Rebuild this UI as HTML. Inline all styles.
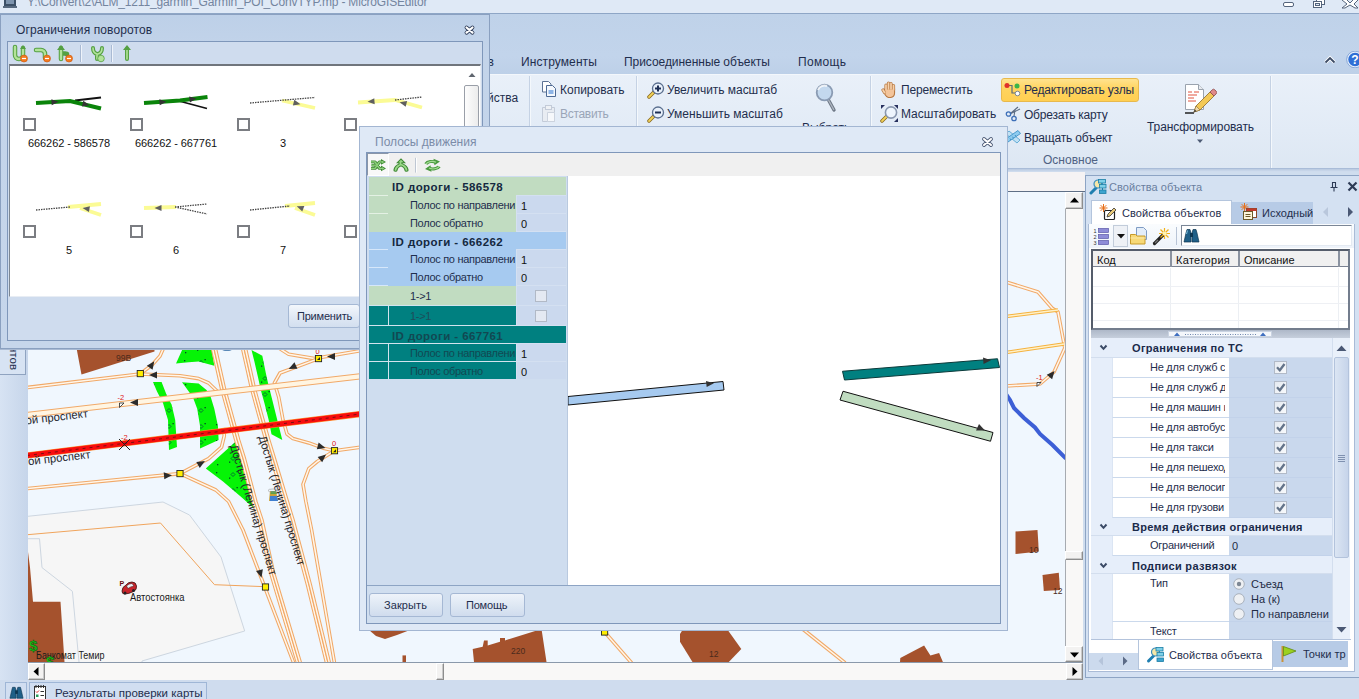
<!DOCTYPE html>
<html lang="ru"><head><meta charset="utf-8"><title>MicroGISEditor</title>
<style>
*{box-sizing:border-box;margin:0;padding:0}
html,body{width:1359px;height:699px;overflow:hidden}
body{position:relative;background:#cfddee;font-family:"Liberation Sans",sans-serif;font-size:11px;color:#1e2b44}
.a{position:absolute}
.t{position:absolute;white-space:nowrap;line-height:14px}
.r12{font-size:12px;color:#1f2e4d}
/* title */
#title{left:0;top:0;width:1359px;height:14px;background:#dfe9f6;border-bottom:1px solid #8ea6c6}
#tabs{left:0;top:14px;width:1359px;height:60px;background:linear-gradient(#bfd2e9,#c2d4eb 70%,#bdd0e8)}
#ribbon{left:0;top:74px;width:1359px;height:95px;background:linear-gradient(#e9f0f9,#e2ebf6 60%,#dde7f3);border-top:1px solid #f3f7fc;border-bottom:1px solid #a9bcd8}
.sep{position:absolute;top:76px;width:1px;height:92px;background:#c5d2e4;box-shadow:1px 0 0 #f4f8fc}
.sbt{background:#f9f8f7}
.sbb{background:#f3f2f1;border:1px solid;border-color:#fff #8d8d8d #8d8d8d #fff;box-shadow:inset -1px -1px 0 #c9c9c9}
</style></head><body>
<!--TITLE-->
<div id="title" class="a">
<svg class="a" style="left:3px;top:0" width="14" height="8" viewBox="0 0 14 8"><rect x="1" y="0" width="12" height="6" fill="#3b4f66"/><rect x="3" y="0" width="8" height="4" fill="#7d93ad"/><rect x="0" y="6" width="14" height="2" fill="#56687e"/></svg>
<div class="t" style="left:27px;top:-5px;font-size:12px;letter-spacing:-0.17px;color:#74859f">Y:\Convert\2\ALM_1211_garmin_Garmin_POI_ConvTYP.mp - MicroGISEditor</div>
<svg class="a" style="left:1280px;top:0" width="79" height="10" viewBox="0 0 79 10"><rect x="3.5" y="2.5" width="10" height="4" rx="1.5" fill="#fff" stroke="#54647c"/><rect x="36.500" y="-1.500" width="8" height="6" fill="#fff" stroke="#54647c"/><rect x="33.500" y="1.500" width="8" height="6" fill="#fff" stroke="#54647c"/><rect x="35.500" y="3.500" width="4" height="2" fill="#dfe9f6" stroke="#54647c"/><path d="M65 -2 L70 3 L75 -2 L78 -2 L78 0 L74 4 L78 8 L75 8 L70 5 L65 8 L62 8 L67 4 L62 0 L62 -2 Z" fill="#fff" stroke="#54647c"/></svg>
</div>
<div id="tabs" class="a"></div>
<div id="ribbon" class="a"></div>

<div class="t r12" style="left:487.500px;top:55px">в</div>
<div class="t r12" style="left:521px;top:55px;letter-spacing:.1px">Инструменты</div>
<div class="t r12" style="left:624px;top:55px;letter-spacing:-.05px">Присоединенные объекты</div>
<div class="t r12" style="left:798px;top:55px;letter-spacing:.35px">Помощь</div>
<div class="t r12" style="left:465.500px;top:91px">Свойства</div>
<svg class="a" style="left:1323px;top:53px" width="14" height="12" viewBox="0 0 14 12"><path d="M2.5 9.500 L7 5 L11.500 9.500" fill="none" stroke="#fff" stroke-width="3.600" /><path d="M2.5 9.500 L7 5 L11.500 9.500" fill="none" stroke="#3d4c66" stroke-width="1.800"/></svg>
<svg class="a" style="left:1346px;top:51px" width="13" height="17" viewBox="0 0 13 17"><circle cx="9" cy="8.500" r="7.500" fill="#2f6fd6" stroke="#e8f0fb" stroke-width="1.500"/><circle cx="9" cy="8.500" r="8.300" fill="none" stroke="#5b86c9" stroke-width=".6"/><text x="5.300" y="13" font-family="Liberation Sans,sans-serif" font-weight="700" font-size="12" fill="#fff">?</text></svg>
<div class="sep" style="left:529px"></div><div class="sep" style="left:636px"></div><div class="sep" style="left:870px"></div><div class="sep" style="left:1270px"></div>
<!--copy-->
<svg class="a" style="left:541px;top:80px" width="16" height="18" viewBox="0 0 16 18"><path d="M1.500 1.500 h6 l2.500 2.500 v8 h-8.500z" fill="#fff" stroke="#5d7394"/><path d="M5.500 5.500 h6 l3 3 v8 h-9z" fill="#f4f8fd" stroke="#4e6a94"/><rect x="7.500" y="10" width="5" height="4" fill="#8db4e6"/></svg>
<div class="t r12" style="left:560px;top:83px">Копировать</div>
<svg class="a" style="left:541px;top:105px" width="16" height="18" viewBox="0 0 16 18"><path d="M1.500 2.500 h12 v14 h-12z" fill="#e8ecf2" stroke="#c3cbd8"/><rect x="4.500" y="0.500" width="6" height="4" fill="#eef1f5" stroke="#c3cbd8"/><path d="M6.500 7.500 h7 v9 h-7z" fill="#f6f8fb" stroke="#ccd3de"/></svg>
<div class="t r12" style="left:560px;top:107px;letter-spacing:-.3px;color:#9aa5b7">Вставить</div>
<!--zoom in/out-->
<svg class="a" style="left:647px;top:82px" width="18" height="17" viewBox="0 0 18 17"><path d="M2 15 L8 9" stroke="#8a6a1c" stroke-width="3.500" stroke-linecap="round"/><path d="M2 15 L7 10" stroke="#f2d35b" stroke-width="1.800" stroke-linecap="round"/><circle cx="11" cy="6.500" r="5.500" fill="#e9f1fb" stroke="#5a6f8f" stroke-width="1.300"/><path d="M8 6.500 h6 M11 3.500 v6" stroke="#1d2f55" stroke-width="2"/></svg>
<div class="t r12" style="left:667px;top:83px;letter-spacing:-.04px">Увеличить масштаб</div>
<svg class="a" style="left:647px;top:106px" width="18" height="17" viewBox="0 0 18 17"><path d="M2 15 L8 9" stroke="#8a6a1c" stroke-width="3.500" stroke-linecap="round"/><path d="M2 15 L7 10" stroke="#f2d35b" stroke-width="1.800" stroke-linecap="round"/><circle cx="11" cy="6.500" r="5.500" fill="#e9f1fb" stroke="#5a6f8f" stroke-width="1.300"/><path d="M8 6.500 h6" stroke="#1d2f55" stroke-width="2"/></svg>
<div class="t r12" style="left:667px;top:107px">Уменьшить масштаб</div>
<!--big magnifier-->
<svg class="a" style="left:812px;top:82px" width="26" height="32" viewBox="0 0 26 32"><path d="M16.500 18 L22 28" stroke="#6d7785" stroke-width="3.400" stroke-linecap="round"/><path d="M16.500 18 L21.700 27.500" stroke="#aeb6c1" stroke-width="1.400" stroke-linecap="round"/><circle cx="12.500" cy="10.500" r="7.800" fill="#c3d8ee" stroke="#8a9bb3" stroke-width="1.800"/><path d="M6 8 a7 7 0 0 1 9 -4" fill="none" stroke="#fff" stroke-width="2" opacity=".8"/></svg>
<div class="t r12" style="left:802px;top:121px">Выбрать</div>
<!--hand-->
<svg class="a" style="left:881px;top:80px" width="17" height="19" viewBox="0 0 17 19"><g stroke-linecap="round" fill="none"><path d="M5 10 V5 M7.500 9 V3 M10 9 V3.500 M12.500 10 V5.500 M3.500 12.500 L2 10" stroke="#b87942" stroke-width="3.200"/><path d="M4 9 h9.500 v4 q0 4 -4 4.500 h-2 q-2 -.5 -3.500 -3z" fill="#b87942" stroke="#b87942" stroke-width="1.200"/><path d="M5 10 V5 M7.500 9 V3 M10 9 V3.500 M12.500 10 V5.500 M3.500 12.500 L2 10" stroke="#f6d2ad" stroke-width="1.700"/><path d="M4.500 9.500 h8.500 v3.500 q0 3.500 -3.500 4 h-2 q-1.800 -.5 -3 -2.800z" fill="#f3c49a" stroke="none"/></g></svg>
<div class="t r12" style="left:901px;top:83px;letter-spacing:-.18px">Переместить</div>
<svg class="a" style="left:880px;top:104px" width="19" height="19" viewBox="0 0 19 19"><path d="M1 1 h4 l-4 4z M18 18 h-4 l4 -4z M18 1 v4 l-4 -4z" fill="#27305e"/><path d="M2 17 L7 12" stroke="#8a6a1c" stroke-width="3.500" stroke-linecap="round"/><path d="M2 17 L6.500 12.500" stroke="#f2d35b" stroke-width="1.800" stroke-linecap="round"/><circle cx="11" cy="8.500" r="5.600" fill="#eef5fd" stroke="#8a98b0" stroke-width="1.600"/></svg>
<div class="t r12" style="left:901px;top:107px;letter-spacing:-.05px">Масштабировать</div>
<!--edit nodes-->
<div class="a" style="left:1001px;top:78px;width:138px;height:24px;border:1px solid #e8b94d;border-radius:3px;background:linear-gradient(#ffe38f,#ffd45e 45%,#ffcf52)"></div>
<svg class="a" style="left:1004px;top:82px" width="17" height="16" viewBox="0 0 17 16"><path d="M3 3.500 H8 V11 H13" fill="none" stroke="#5a6b7d" stroke-width="1.200"/><circle cx="3" cy="3.500" r="2.500" fill="#e0312a"/><circle cx="13" cy="4" r="2.500" fill="#3bb54a"/><circle cx="13.500" cy="11.500" r="2.300" fill="#fff" stroke="#7a8796"/></svg>
<div class="t r12" style="left:1024px;top:83px;letter-spacing:-.18px">Редактировать узлы</div>
<svg class="a" style="left:1005px;top:106px" width="16" height="16" viewBox="0 0 16 16"><path d="M5 8 L15 3 M5 8 L13 1" stroke="#5b6b82" stroke-width="1.100" fill="none"/><circle cx="3.500" cy="8" r="2.200" fill="none" stroke="#3d6fb8" stroke-width="1.300"/><circle cx="9" cy="12.500" r="2.200" fill="none" stroke="#3d6fb8" stroke-width="1.300"/><path d="M9 10 L10 4" stroke="#5b6b82" stroke-width="1.100"/></svg>
<div class="t r12" style="left:1024px;top:107.500px;letter-spacing:-.22px">Обрезать карту</div>
<svg class="a" style="left:1005px;top:129px" width="17" height="16" viewBox="0 0 17 16"><path d="M1 5 L4 2 L15 11 L12 14z" fill="#bfe0f4" stroke="#5aa7d4" stroke-width=".9"/><path d="M3 13 L1.500 9.500 L13 1.500 L15.500 4.500z" fill="#8ecbef" stroke="#3e94c8" stroke-width=".9"/><path d="M5 9.500 l1 1.500 M7.500 7.700 l1 1.500 M10 6 l1 1.500" stroke="#2f7fb5" stroke-width=".8"/></svg>
<div class="t r12" style="left:1024px;top:131px;letter-spacing:-.18px">Вращать объект</div>
<div class="t r12" style="left:1043px;top:153px;color:#4f6283">Основное</div>
<!--transform-->
<svg class="a" style="left:1183px;top:83px" width="34" height="32" viewBox="0 0 34 32"><path d="M2.500 1.500 h13 l5 5 v20 h-18z" fill="#fff" stroke="#9aa3ae"/><path d="M15.500 1.500 v5 h5" fill="#e8ebef" stroke="#9aa3ae"/><path d="M5 9 h4 M5 12 h9 M5 15 h6 M5 18 h8 M11 9 h5" stroke="#e0553f" stroke-width="1"/><path d="M2 30 h9" stroke="#222" stroke-width="1.500"/><path d="M11 29 L13 23 L27 9 L31 13 L17 27z" fill="#f3c956" stroke="#8a6a2a" stroke-width=".8"/><path d="M27 9 L29 7 a2 2 0 0 1 3 0 l1 1 a2 2 0 0 1 0 3 L31 13z" fill="#e08a8a" stroke="#8a4a4a" stroke-width=".8"/><path d="M11 29 L13 23 L17 27z" fill="#f0dcb0" stroke="#8a6a2a" stroke-width=".6"/><path d="M11 29 l.8 -2.500 1.700 1.700z" fill="#333"/></svg>
<div class="t r12" style="left:1147px;top:120px;letter-spacing:-.1px">Трансформировать</div>
<svg class="a" style="left:1196px;top:139px" width="8" height="5" viewBox="0 0 8 5"><path d="M1 .5 h6 l-3 3.500z" fill="#4c5a74"/></svg>


<div class="a" style="left:0;top:169px;width:1359px;height:3px;background:linear-gradient(#b9c9e0,#d2dff0)"></div>
<div class="a" style="left:0;top:172px;width:1085px;height:19px;background:#f5f3f4"></div>
<div class="a" style="left:0;top:191px;width:1085px;height:1px;background:#5f6f86"></div>
<svg class="a" style="left:28px;top:192px" width="1037" height="470" viewBox="28 192 1037 470"><defs><pattern id="gd" width="32" height="16" patternUnits="userSpaceOnUse" patternTransform="translate(3,5)"><path d="M6 3.500 l2 2 -2 2 -2 -2z" fill="none" stroke="#063" stroke-width=".9"/><rect x="9.500" y="2" width="1.300" height="1.300" fill="#042"/><rect x="2" y="8.500" width="1.300" height="1.300" fill="#042"/><rect x="22" y="11" width="1.300" height="1.300" fill="#042"/><rect x="21" y="3" width="1.300" height="1.300" fill="#042"/></pattern></defs><rect x="28" y="192" width="1037" height="470" fill="#f0f7fe"/><polygon points="27,516.4 163,502 189.5,515 221,557 244.7,631 142,661 142,663 27,663" fill="#f6f6f6" stroke="#cdd6e0" stroke-width="1"/><polyline points="27.6,538.7 39.5,538.7 42,567.6 72.4,591.3 79,662" fill="none" stroke="#cdd6e0"/><polyline points="27.6,534.7 160.5,523 214.5,584.700 263,586.600" fill="none" stroke="#f0a45c"/><polygon points="75,340 154.5,340 154.5,351.5 81.5,374.5" fill="#a5522d" /><polygon points="27.6,549 30,567.6 33,601.8 60.5,601.8 64.5,662 27.6,662" fill="#a5522d" /><polygon points="369,630 410,630 397,635 385,639 376,636" fill="#a5522d" /><polygon points="402.5,655.4 406,655.4 406,662 402.5,662" fill="#a5522d" /><polygon points="472.7,649 482.7,646.7 484,640.4 487.7,640.4 487.7,645.4 500,641.7 500,638 505,638 505,640.4 532.8,631.7 541.5,629 546.5,662 474,662" fill="#a5522d" /><polygon points="680,634 683.8,628 726.3,628 741.3,649 728.8,662 692.5,662 680,641.7" fill="#a5522d" /><polygon points="900.3,658 924.1,645.4 930.4,655.4 939.1,653 942.9,662 900,662" fill="#a5522d" /><polygon points="1015.5,531.5 1037.5,530 1038.8,551.5 1015.5,554" fill="#a5522d" /><polygon points="1042.5,575 1058.8,572.8 1060,590 1043.8,591" fill="#a5522d" /><polygon points="183,348 211.5,348 214.3,365.7 198.6,361.5 188.6,362.2 176,363.5" fill="#06f406" /><polygon points="183,348 211.5,348 214.3,365.7 198.6,361.5 188.6,362.2 176,363.5" fill="url(#gd)" /><polygon points="153,382 161.6,382 167.4,397 171.6,404.4 175.2,420 177,447 169,450 168,420 163,403 157,391.5" fill="#06f406" /><polygon points="153,382 161.6,382 167.4,397 171.6,404.4 175.2,420 177,447 169,450 168,420 163,403 157,391.5" fill="url(#gd)" /><polygon points="182,382.2 198.6,383.6 206.5,390 210.8,397.2 214.3,408.7 217.9,425.8 218.6,440 200,448.6 200,425.8 197.2,408.7 192.9,397.2 185.7,387.2" fill="#06f406" /><polygon points="182,382.2 198.6,383.6 206.5,390 210.8,397.2 214.3,408.7 217.9,425.8 218.6,440 200,448.6 200,425.8 197.2,408.7 192.9,397.2 185.7,387.2" fill="url(#gd)" /><polygon points="251.5,350 262.3,355.7 265.8,372.9 268,382.9 271.6,397.2 275.9,414.4 278.7,425.8 282.3,440 271.5,434.3 268.7,420.1 264.4,403 260.8,390 258,377.2 254.4,361.5" fill="#06f406" /><polygon points="251.5,350 262.3,355.7 265.8,372.9 268,382.9 271.6,397.2 275.9,414.4 278.7,425.8 282.3,440 271.5,434.3 268.7,420.1 264.4,403 260.8,390 258,377.2 254.4,361.5" fill="url(#gd)" /><polygon points="205.8,468.6 235.8,441.4 237.2,444.3 240,458.6 247.2,480 254.4,508.7 241.5,497.2 223,481.5" fill="#06f406" /><polygon points="205.8,468.6 235.8,441.4 237.2,444.3 240,458.6 247.2,480 254.4,508.7 241.5,497.2 223,481.5" fill="url(#gd)" /><polyline points="27,387.5 140,374 180,375.7 198.6,378.6 208.6,383 217,391" fill="none" stroke="#f1a968" stroke-width="3.600" stroke-linejoin="round"/><polyline points="27,387.5 140,374 180,375.7 198.6,378.6 208.6,383 217,391" fill="none" stroke="#fff6ea" stroke-width="1.500" stroke-linejoin="round"/><polyline points="140,374 152,365 160,356 164,347" fill="none" stroke="#f1a968" stroke-width="3.600" stroke-linejoin="round"/><polyline points="140,374 152,365 160,356 164,347" fill="none" stroke="#fff6ea" stroke-width="1.500" stroke-linejoin="round"/><polyline points="27,488.6 180,473.6" fill="none" stroke="#f1a968" stroke-width="3.600" stroke-linejoin="round"/><polyline points="27,488.6 180,473.6" fill="none" stroke="#fff6ea" stroke-width="1.500" stroke-linejoin="round"/><polyline points="180,473.6 208.6,458.6 221.5,447.2 224.3,435.7 223.6,428" fill="none" stroke="#f1a968" stroke-width="3.600" stroke-linejoin="round"/><polyline points="180,473.6 208.6,458.6 221.5,447.2 224.3,435.7 223.6,428" fill="none" stroke="#fff6ea" stroke-width="1.500" stroke-linejoin="round"/><polyline points="180,473.6 215.8,490 228.6,501.5 243,530 293.7,663" fill="none" stroke="#f1a968" stroke-width="3.600" stroke-linejoin="round"/><polyline points="180,473.6 215.8,490 228.6,501.5 243,530 293.7,663" fill="none" stroke="#fff6ea" stroke-width="1.500" stroke-linejoin="round"/><g transform="translate(-1.400,0)"><polyline points="213.6,347 223,388.6 228.6,408.7 237.2,440 243,458.6 254.4,501.5 260.5,520 272.3,573.6 299,663" fill="none" stroke="#f1a968" stroke-width="3.600" stroke-linejoin="round"/><polyline points="213.6,347 223,388.6 228.6,408.7 237.2,440 243,458.6 254.4,501.5 260.5,520 272.3,573.6 299,663" fill="none" stroke="#fff6ea" stroke-width="1.500" stroke-linejoin="round"/></g><g transform="translate(1.400,0)"><polyline points="213.6,347 223,388.6 228.6,408.7 237.2,440 243,458.6 254.4,501.5 260.5,520 272.3,573.6 299,663" fill="none" stroke="#f1a968" stroke-width="3.600" stroke-linejoin="round"/><polyline points="213.6,347 223,388.6 228.6,408.7 237.2,440 243,458.6 254.4,501.5 260.5,520 272.3,573.6 299,663" fill="none" stroke="#fff6ea" stroke-width="1.500" stroke-linejoin="round"/></g><g transform="translate(-1.400,0)"><polyline points="243.7,347 253,388.6 260,414.4 267.3,440 273,458.6 285.9,501.5 291.6,520 308.8,584.4 328,663" fill="none" stroke="#f1a968" stroke-width="3.600" stroke-linejoin="round"/><polyline points="243.7,347 253,388.6 260,414.4 267.3,440 273,458.6 285.9,501.5 291.6,520 308.8,584.4 328,663" fill="none" stroke="#fff6ea" stroke-width="1.500" stroke-linejoin="round"/></g><g transform="translate(1.400,0)"><polyline points="243.7,347 253,388.6 260,414.4 267.3,440 273,458.6 285.9,501.5 291.6,520 308.8,584.4 328,663" fill="none" stroke="#f1a968" stroke-width="3.600" stroke-linejoin="round"/><polyline points="243.7,347 253,388.6 260,414.4 267.3,440 273,458.6 285.9,501.5 291.6,520 308.8,584.4 328,663" fill="none" stroke="#fff6ea" stroke-width="1.500" stroke-linejoin="round"/></g><polyline points="277.3,347 288.7,354.3 314.5,358.6 360,350.7" fill="none" stroke="#f1a968" stroke-width="3.600" stroke-linejoin="round"/><polyline points="277.3,347 288.7,354.3 314.5,358.6 360,350.7" fill="none" stroke="#fff6ea" stroke-width="1.500" stroke-linejoin="round"/><polyline points="318.5,358.6 280,373 274.4,383 278.7,397 283,420 287,434 293,438.6 308.8,442.9 324.5,448.6 334.5,450.7 362,447" fill="none" stroke="#f1a968" stroke-width="3.600" stroke-linejoin="round"/><polyline points="318.5,358.6 280,373 274.4,383 278.7,397 283,420 287,434 293,438.6 308.8,442.9 324.5,448.6 334.5,450.7 362,447" fill="none" stroke="#fff6ea" stroke-width="1.500" stroke-linejoin="round"/><polyline points="334.5,450.7 317.3,461.5 308.8,468.6 303,484.4 305.9,501.5 311.6,530 334.5,663" fill="none" stroke="#f1a968" stroke-width="3.600" stroke-linejoin="round"/><polyline points="334.5,450.7 317.3,461.5 308.8,468.6 303,484.4 305.9,501.5 311.6,530 334.5,663" fill="none" stroke="#fff6ea" stroke-width="1.500" stroke-linejoin="round"/><polyline points="27,415 362,376.1" fill="none" stroke="#f1a968" stroke-width="6.200" stroke-linejoin="round"/><polyline points="27,415 362,376.1" fill="none" stroke="#fff5e2" stroke-width="4.200" stroke-linejoin="round"/><polyline points="604.6,632 631.7,663" fill="none" stroke="#f1a968" stroke-width="3.600" stroke-linejoin="round"/><polyline points="604.6,632 631.7,663" fill="none" stroke="#fff6ea" stroke-width="1.500" stroke-linejoin="round"/><polyline points="801.4,628 845.2,663" fill="none" stroke="#f1a968" stroke-width="3.600" stroke-linejoin="round"/><polyline points="801.4,628 845.2,663" fill="none" stroke="#fff6ea" stroke-width="1.500" stroke-linejoin="round"/><polyline points="1006,282 1038,292 1052,308 1058,312 1064.8,348 1054,372 1040,384 1006,386" fill="none" stroke="#f1a968" stroke-width="3.600" stroke-linejoin="round"/><polyline points="1006,282 1038,292 1052,308 1058,312 1064.8,348 1054,372 1040,384 1006,386" fill="none" stroke="#fff6ea" stroke-width="1.500" stroke-linejoin="round"/><polyline points="1006,316.5 1058,310" fill="none" stroke="#f5b23e" stroke-width="3.600" stroke-linejoin="round"/><polyline points="1006,316.5 1058,310" fill="none" stroke="#fff1c8" stroke-width="1.500" stroke-linejoin="round"/><polyline points="1006,352.5 1064,344" fill="none" stroke="#f5b23e" stroke-width="3.600" stroke-linejoin="round"/><polyline points="1006,352.5 1064,344" fill="none" stroke="#fff1c8" stroke-width="1.500" stroke-linejoin="round"/><polyline points="1006,394 1010,400 1014,408 1020,414 1024,418 1035,427.500 1040,434 1052.500,445 1066,458.500" fill="none" stroke="#3d5fd6" stroke-width="4"/><line x1="27" y1="455.5" x2="362" y2="413.8" stroke="#ff8c2a" stroke-width="6.200"/><line x1="27" y1="455.5" x2="362" y2="413.8" stroke="#f70d0d" stroke-width="5"/><line x1="27" y1="455.5" x2="362" y2="413.8" stroke="#7a1010" stroke-width="1" stroke-dasharray="3 4"/><rect x="137.2" y="370.5" width="6.200" height="6.200" fill="#ffee00" stroke="#222" stroke-width=".9"/><rect x="176.9" y="470.5" width="6.200" height="6.200" fill="#ffee00" stroke="#222" stroke-width=".9"/><rect x="262.4" y="583.9" width="6.200" height="6.200" fill="#ffee00" stroke="#222" stroke-width=".9"/><rect x="601.5" y="628.9" width="6.200" height="6.200" fill="#ffee00" stroke="#222" stroke-width=".9"/><rect x="315.4" y="355.5" width="6.200" height="6.200" fill="#ffee00" stroke="#222" stroke-width=".9"/><path d="M317.0 360.1 L320.0 357.1 L320.0 360.1z" fill="#222"/><rect x="331.4" y="447.6" width="6.200" height="6.200" fill="#ffee00" stroke="#222" stroke-width=".9"/><path d="M333.0 452.2 L336.0 449.2 L336.0 452.2z" fill="#222"/><path d="M-4,0 L4,-3.500 L4,3.500z" transform="translate(152,364.500) rotate(125)" fill="#2b2b2b"/><path d="M-4,0 L4,-3.500 L4,3.500z" transform="translate(153,375) rotate(0)" fill="#2b2b2b"/><path d="M-4,0 L4,-3.500 L4,3.500z" transform="translate(134,402.4) rotate(0)" fill="#2b2b2b"/><path d="M-4,0 L4,-3.500 L4,3.500z" transform="translate(331,356.5) rotate(0)" fill="#2b2b2b"/><path d="M-4,0 L4,-3.500 L4,3.500z" transform="translate(292.3,367.2) rotate(-25)" fill="#2b2b2b"/><path d="M-4,0 L4,-3.500 L4,3.500z" transform="translate(321.6,447) rotate(195)" fill="#2b2b2b"/><path d="M-4,0 L4,-3.500 L4,3.500z" transform="translate(323,457) rotate(140)" fill="#2b2b2b"/><path d="M-4,0 L4,-3.500 L4,3.500z" transform="translate(201.5,463) rotate(150)" fill="#2b2b2b"/><path d="M-4,0 L4,-3.500 L4,3.500z" transform="translate(168,475.5) rotate(175)" fill="#2b2b2b"/><path d="M-4,0 L4,-3.500 L4,3.500z" transform="translate(260.5,574) rotate(-105)" fill="#2b2b2b"/><path d="M-4,0 L4,-3.500 L4,3.500z" transform="translate(1052,374) rotate(130)" fill="#2b2b2b"/><path d="M119.500 403 h4.500 l-4.500 4.500z M1037 382.500 h4 l-4 4z" fill="#fff" stroke="#222" stroke-width=".8"/><path d="M119 439 l11 11 m0 -11 l-11 11" stroke="#222" stroke-width="1"/><g font-family="Liberation Sans,sans-serif" font-size="7.500" font-weight="400" fill="#e01515"><text x="117.500" y="400">-2</text><text x="121" y="440">-2</text><text x="315.500" y="353.500">0</text><text x="332" y="445.500">0</text><text x="1036" y="380">-1</text></g><g font-family="Liberation Sans,sans-serif" font-size="8.500" fill="#4a2a1c"><text x="116" y="361">99B</text><text x="511" y="654">220</text><text x="709" y="657">12</text><text x="1029" y="553">10</text><text x="1053" y="594">12</text></g><g font-family="Liberation Sans,sans-serif" font-size="11.300" fill="#26262c"><text transform="translate(26,424.400) rotate(-6.600)">ой проспект</text><text transform="translate(28.500,465.300) rotate(-6.600)">ой проспект</text><text transform="translate(230,446) rotate(73)" textLength="136">Достык (Ленина) проспект</text><text transform="translate(258.500,437) rotate(73)" textLength="135">Достык (Ленина) проспект</text></g><g font-family="Liberation Sans,sans-serif" font-size="10.500" fill="#1a1a1a"><text x="130" y="600.500" textLength="54.500" lengthAdjust="spacingAndGlyphs">Автостоянка</text><text x="36" y="658.500" textLength="68.500" lengthAdjust="spacingAndGlyphs">Банкомат Темир</text></g><path d="M122 591 q0 -4 4 -6 q2 -3 6 -3 q4 0 4.500 4 q.5 4 -3 5.500 q-5 2.500 -9 2.500 q-2.500 0 -2.500 -3z" fill="#c8242b" stroke="#3a1012" stroke-width=".8"/><path d="M126.500 586 q2 -2.500 5.500 -2.500 l2 2.500 q-3.500 .5 -6 2.500z" fill="#e8eef4" stroke="#3a1012" stroke-width=".5"/><circle cx="125" cy="593" r="1.500" fill="#222"/><circle cx="133.500" cy="590.500" r="1.500" fill="#222"/><text x="119.500" y="585.500" font-family="Liberation Sans,sans-serif" font-size="7" font-weight="700" fill="#6b0f12">P</text><g font-family="Liberation Sans,sans-serif" font-size="15" font-weight="700" fill="#19c419" stroke="#0a5a0a" stroke-width=".5"><text x="29" y="651">$</text><text x="46" y="667">$</text></g><path d="M270 491 h6 l2 10 h-9z" fill="#c9a23a"/><path d="M270 496 h7 l1 5 h-8z" fill="#3f7fd0"/><path d="M271 491 h5 l.5 3 h-6z" fill="#5aa24a"/><ellipse cx="273" cy="490.500" rx="5" ry="1.500" fill="none" stroke="#999" stroke-width=".6"/><ellipse cx="227" cy="349" rx="5" ry="2" fill="#5a89b8"/><path d="M222 347 h10 v2 h-10z" fill="#c0502a"/></svg>
<!--left strip-->
<div class="a" style="left:0;top:169px;width:28px;height:530px;background:linear-gradient(90deg,#d7e3f3,#c6d5ea)"></div>
<div class="a" style="left:0;top:340px;width:26px;height:35px;background:#d7e3f3;border:1px solid #8fa3c0;border-left:0"></div>
<div class="t" style="left:2px;top:351px;font-size:11.500px;transform:rotate(90deg);transform-origin:center;color:#1f2e4d">нтов</div>
<!--v scrollbar-->
<div class="a sbt" style="left:1065px;top:192px;width:18px;height:470px;border-left:1px solid #a7abb1"></div>
<div class="a sbb" style="left:1065px;top:192px;width:18px;height:17px"></div>
<svg class="a" style="left:1070px;top:197px" width="9" height="6"><path d="M0 5.500 L4.500 .5 L9 5.500z" fill="#000"/></svg>
<div class="a sbb" style="left:1065px;top:551px;width:18px;height:9px"></div>
<div class="a sbb" style="left:1065px;top:646px;width:18px;height:16px"></div>
<svg class="a" style="left:1070px;top:652px" width="9" height="6"><path d="M0 .5 L4.500 5.500 L9 .5z" fill="#000"/></svg>
<!--h scrollbar-->
<div class="a sbt" style="left:28px;top:662px;width:1055px;height:18px;border-top:1px solid #8b99ab"></div>
<div class="a sbb" style="left:28px;top:663px;width:17px;height:17px"></div>
<svg class="a" style="left:33px;top:667px" width="6" height="9"><path d="M5.500 0 L.5 4.500 L5.500 9z" fill="#000"/></svg>
<div class="a sbb" style="left:436px;top:663px;width:8px;height:17px"></div>
<div class="a sbb" style="left:1066px;top:663px;width:17px;height:17px"></div>
<svg class="a" style="left:1072px;top:667px" width="6" height="9"><path d="M.5 0 L5.500 4.500 L.5 9z" fill="#000"/></svg>

<div class="a" style="left:1085px;top:175px;width:274px;height:503px;background:#d4e1f2;border:1px solid #8da4c4;border-right:0"></div>
<div class="a" style="left:1088px;top:199px;width:267px;height:473px;background:#fff;border:1px solid #a9bbd6;border-top:0"></div>
<svg class="a" style="left:1089px;top:177px" width="18" height="19" viewBox="0 0 18 19"><path d="M2 16 L7 11" stroke="#1f7fb0" stroke-width="3" stroke-linecap="round"/><circle cx="9" cy="7" r="4" fill="#f6e7a8" stroke="#3c8fbf" stroke-width="1.200"/><rect x="9.500" y="2.500" width="7" height="3.500" fill="#7fd0e8" stroke="#1b7ea6" stroke-width=".8"/><rect x="10.500" y="7.500" width="6.500" height="3.500" fill="#7fd0e8" stroke="#1b7ea6" stroke-width=".8"/><rect x="10.500" y="13" width="6.500" height="3.500" fill="#3da4cf" stroke="#1b7ea6" stroke-width=".8"/><path d="M13 6 v1.500 M13.500 11 v2" stroke="#1b7ea6"/></svg>
<div class="t" style="left:1109px;top:180px;font-size:11px;letter-spacing:.05px;color:#6a7f9f">Свойства объекта</div>
<svg class="a" style="left:1329px;top:181px" width="30" height="12" viewBox="0 0 30 12"><path d="M3 1.500 h4 M3.500 1.500 v5 M6.500 1.500 v5 M1.500 6.500 h7 M5 6.500 v4" stroke="#2c3a55" stroke-width="1.100" fill="none"/><path d="M19.500 1.500 L27.500 9.500 M27.500 1.500 L19.500 9.500" stroke="#2c3a55" stroke-width="2.200"/></svg>
<div class="a" style="left:1088px;top:199px;width:267px;height:25px;background:#d4e1f2"></div>
<div class="a" style="left:1091px;top:200px;width:141px;height:24px;background:#fff;border:1px solid #b4c5dd;border-bottom:0"></div>
<div class="a" style="left:1232px;top:202px;width:81px;height:22px;background:#b7cbe6"></div>
<svg class="a" style="left:1099px;top:203px" width="19" height="18" viewBox="0 0 19 18"><path d="M4.500 1 v8 M.5 5 h8 M1.700 2.200 l5.600 5.600 M7.300 2.200 l-5.600 5.600" stroke="#e8701a" stroke-width="1"/><rect x="5.500" y="7.500" width="10" height="9" rx="1" fill="#fff" stroke="#222" stroke-width="1.200"/><path d="M8 14 L9 11 L15 5 L17 7 L11 13z" fill="#e7c878" stroke="#333" stroke-width=".8"/></svg>
<div class="t" style="left:1122px;top:206px;font-size:11px;letter-spacing:.07px;color:#1f2e4d">Свойства объектов</div>
<svg class="a" style="left:1240px;top:203px" width="18" height="18" viewBox="0 0 18 18"><path d="M4.500 0 v8 M.5 4 h8 M1.700 1.200 l5.600 5.600 M7.300 1.200 l-5.600 5.600" stroke="#e8701a" stroke-width="1"/><rect x="6.500" y="5.500" width="10" height="9" fill="#fff" stroke="#8a4a2a"/><rect x="6.500" y="5.500" width="10" height="2.500" fill="#c0392b"/><rect x="3.500" y="8.500" width="9" height="8" fill="#fdf6da" stroke="#6b5a2a"/><path d="M5.500 11.500 h5 M5.500 13.500 h5" stroke="#6b5a2a"/></svg>
<div class="t" style="left:1262px;top:206px;font-size:11px;color:#1f2e4d;width:51px;overflow:hidden">Исходный</div>
<svg class="a" style="left:1320px;top:206px" width="36" height="12" viewBox="0 0 36 12"><path d="M8 1 L3 6 L8 11z" fill="#b9c7dc"/><path d="M28 1 L33 6 L28 11z" fill="#4a5874"/></svg>
<div class="a" style="left:1089px;top:224px;width:265px;height:24px;background:linear-gradient(#fafcfe,#eef3fa)"></div>
<svg class="a" style="left:1092px;top:227px" width="20" height="19" viewBox="0 0 20 19"><g font-family="Liberation Sans,sans-serif" font-size="5.500" fill="#333"><text x="1.500" y="5.500">1</text><text x="1.500" y="11.500">2</text><text x="1.500" y="17.500">3</text></g><rect x="6.500" y="1.500" width="10" height="4" fill="#8e8cd8" stroke="#5a58a8" stroke-width=".7"/><rect x="6.500" y="7.500" width="10" height="4" fill="#8e8cd8" stroke="#5a58a8" stroke-width=".7"/><rect x="6.500" y="13.500" width="10" height="4" fill="#8e8cd8" stroke="#5a58a8" stroke-width=".7"/></svg>
<div class="a" style="left:1113px;top:225px;width:15px;height:22px;background:#eef1f6;border:1px solid #c2ccda"></div><svg class="a" style="left:1117px;top:234px" width="8" height="5"><path d="M0 0 h8 l-4 4.500z" fill="#111"/></svg>
<svg class="a" style="left:1129px;top:226px" width="20" height="20" viewBox="0 0 20 20"><path d="M7.500 1.500 h7 l3 3 v9 h-10z" fill="#e3edf9" stroke="#7f9cc4"/><path d="M1.500 8.500 h5 l1.500 1.500 h8 v8 h-14.500z" fill="#f7d977" stroke="#c79a2a"/><path d="M1.500 12 h14.500" stroke="#fbe9a8"/></svg>
<svg class="a" style="left:1152px;top:226px" width="18" height="20" viewBox="0 0 18 20"><path d="M2.500 17.500 L11 9" stroke="#222" stroke-width="3.200" stroke-linecap="round"/><path d="M3 17 L6 14" stroke="#777" stroke-width="1.200"/><path d="M12.500 2 v11 M7 7.500 h11 M8.500 3.500 l8 8 M16.500 3.500 l-8 8" stroke="#f2b21a" stroke-width="1.200"/><circle cx="12.500" cy="7.500" r="2" fill="#fff3b0"/></svg>
<div class="a" style="left:1176px;top:227px;width:1px;height:18px;background:#b8c4d6"></div>
<div class="a" style="left:1181px;top:225px;width:171px;height:21px;background:#fff;border:1px solid;border-color:#7b8696 #e3e9f1 #e3e9f1 #7b8696"></div>
<svg class="a" style="left:1183px;top:228px" width="17" height="16" viewBox="0 0 17 16"><path d="M1 14 L3 5 L4 1.500 h3 l1 3.500 v9z M16 14 L14 5 L13 1.500 h-3 l-1 3.500 v9z" fill="#1f5f87" stroke="#0d3550" stroke-width=".7"/><rect x="7" y="5" width="3" height="4" fill="#0d3550"/><path d="M3.500 6 l1 -3.500" stroke="#7fc0e0" stroke-width="1"/></svg>
<div class="a" style="left:1091px;top:249px;width:259px;height:81px;background:#fff;border:2px solid;border-color:#555d6b #737d8d #737d8d #555d6b"></div>
<div class="a" style="left:1093px;top:251px;width:255px;height:16px;background:#f0f0f0;border-bottom:1px solid #7a8292"></div>
<div class="a" style="left:1170px;top:251px;width:2px;height:16px;background:#8a92a0"></div><div class="a" style="left:1170px;top:268px;width:1px;height:60px;background:#eceff3"></div>
<div class="a" style="left:1238px;top:251px;width:2px;height:16px;background:#8a92a0"></div><div class="a" style="left:1238px;top:268px;width:1px;height:60px;background:#eceff3"></div>
<div class="a" style="left:1338px;top:251px;width:2px;height:16px;background:#8a92a0"></div><div class="a" style="left:1338px;top:268px;width:1px;height:60px;background:#eceff3"></div>
<div class="a" style="left:1093px;top:286px;width:255px;height:1px;background:#eef0f4"></div>
<div class="a" style="left:1093px;top:303px;width:255px;height:1px;background:#eef0f4"></div>
<div class="a" style="left:1093px;top:320px;width:255px;height:1px;background:#eef0f4"></div>
<div class="t" style="left:1097px;top:253px;font-size:11px;color:#111">Код</div>
<div class="t" style="left:1176px;top:253px;font-size:11px;letter-spacing:.3px;color:#111">Категория</div>
<div class="t" style="left:1244px;top:253px;font-size:11px;color:#111">Описание</div>
<div class="a" style="left:1091px;top:330px;width:259px;height:8px;background:linear-gradient(#aeb8c8,#c6cfdc)"></div>
<div class="a" style="left:1168px;top:331px;width:104px;height:6px;background:#f4f7fb;border:1px solid #c9d3e2"></div>
<svg class="a" style="left:1168px;top:331px" width="104" height="6" viewBox="0 0 104 6"><path d="M6 5 l3 -3.500 3 3.500z M92 5 l3 -3.500 3 3.500z" fill="#3f6fc0"/><path d="M17 3.500 h72" stroke="#6f86ad" stroke-width="1" stroke-dasharray="1 1.500"/></svg>
<div class="a" style="left:1091px;top:338px;width:241px;height:302px;background:#e6eefa;overflow:hidden" id="pg">
<div class="a" style="left:0;top:0px;width:241px;height:20px;border-bottom:1px solid #d3deee"></div><svg class="a" style="left:8px;top:6px" width="9" height="7"><path d="M1.500 1.500 L4.500 4.800 L7.500 1.500" fill="none" stroke="#3b4a66" stroke-width="2"/></svg><div class="t" style="left:41px;top:3px;font-weight:700;font-size:11px;letter-spacing:.32px;color:#1a2a4a">Ограничения по ТС</div>
<div class="a" style="left:21px;top:20px;width:117px;height:20px;background:#fff;border-bottom:1px solid #cbd9ec;border-left:1px solid #dbe5f3;overflow:hidden"><div class="t" style="left:37px;top:2px;font-size:11px;letter-spacing:-.25px;color:#1f2e4d;width:75px;overflow:hidden">Не для служб с</div></div><div class="a" style="left:138px;top:20px;width:103px;height:20px;background:#c9d8ed;border-bottom:1px solid #c2d2ea"></div>
<div class="a" style="left:183px;top:23px;width:13px;height:13px;border:1px solid #b2bac7;background:linear-gradient(135deg,#e4e9f0,#f8fafc);"></div><svg class="a" style="left:185px;top:25px" width="10" height="9"><path d="M1 4.300 L3.800 7.300 L8.500 1" fill="none" stroke="#64748a" stroke-width="2.300"/></svg>
<div class="a" style="left:21px;top:40px;width:117px;height:20px;background:#fff;border-bottom:1px solid #cbd9ec;border-left:1px solid #dbe5f3;overflow:hidden"><div class="t" style="left:37px;top:2px;font-size:11px;letter-spacing:-.25px;color:#1f2e4d;width:75px;overflow:hidden">Не для служб д</div></div><div class="a" style="left:138px;top:40px;width:103px;height:20px;background:#c9d8ed;border-bottom:1px solid #c2d2ea"></div>
<div class="a" style="left:183px;top:43px;width:13px;height:13px;border:1px solid #b2bac7;background:linear-gradient(135deg,#e4e9f0,#f8fafc);"></div><svg class="a" style="left:185px;top:45px" width="10" height="9"><path d="M1 4.300 L3.800 7.300 L8.500 1" fill="none" stroke="#64748a" stroke-width="2.300"/></svg>
<div class="a" style="left:21px;top:60px;width:117px;height:20px;background:#fff;border-bottom:1px solid #cbd9ec;border-left:1px solid #dbe5f3;overflow:hidden"><div class="t" style="left:37px;top:2px;font-size:11px;letter-spacing:-.25px;color:#1f2e4d;width:75px;overflow:hidden">Не для машин и</div></div><div class="a" style="left:138px;top:60px;width:103px;height:20px;background:#c9d8ed;border-bottom:1px solid #c2d2ea"></div>
<div class="a" style="left:183px;top:63px;width:13px;height:13px;border:1px solid #b2bac7;background:linear-gradient(135deg,#e4e9f0,#f8fafc);"></div><svg class="a" style="left:185px;top:65px" width="10" height="9"><path d="M1 4.300 L3.800 7.300 L8.500 1" fill="none" stroke="#64748a" stroke-width="2.300"/></svg>
<div class="a" style="left:21px;top:80px;width:117px;height:20px;background:#fff;border-bottom:1px solid #cbd9ec;border-left:1px solid #dbe5f3;overflow:hidden"><div class="t" style="left:37px;top:2px;font-size:11px;letter-spacing:-.25px;color:#1f2e4d;width:75px;overflow:hidden">Не для автобус</div></div><div class="a" style="left:138px;top:80px;width:103px;height:20px;background:#c9d8ed;border-bottom:1px solid #c2d2ea"></div>
<div class="a" style="left:183px;top:83px;width:13px;height:13px;border:1px solid #b2bac7;background:linear-gradient(135deg,#e4e9f0,#f8fafc);"></div><svg class="a" style="left:185px;top:85px" width="10" height="9"><path d="M1 4.300 L3.800 7.300 L8.500 1" fill="none" stroke="#64748a" stroke-width="2.300"/></svg>
<div class="a" style="left:21px;top:100px;width:117px;height:20px;background:#fff;border-bottom:1px solid #cbd9ec;border-left:1px solid #dbe5f3;overflow:hidden"><div class="t" style="left:37px;top:2px;font-size:11px;letter-spacing:-.25px;color:#1f2e4d;width:75px;overflow:hidden">Не для такси</div></div><div class="a" style="left:138px;top:100px;width:103px;height:20px;background:#c9d8ed;border-bottom:1px solid #c2d2ea"></div>
<div class="a" style="left:183px;top:103px;width:13px;height:13px;border:1px solid #b2bac7;background:linear-gradient(135deg,#e4e9f0,#f8fafc);"></div><svg class="a" style="left:185px;top:105px" width="10" height="9"><path d="M1 4.300 L3.800 7.300 L8.500 1" fill="none" stroke="#64748a" stroke-width="2.300"/></svg>
<div class="a" style="left:21px;top:120px;width:117px;height:20px;background:#fff;border-bottom:1px solid #cbd9ec;border-left:1px solid #dbe5f3;overflow:hidden"><div class="t" style="left:37px;top:2px;font-size:11px;letter-spacing:-.25px;color:#1f2e4d;width:75px;overflow:hidden">Не для пешеход</div></div><div class="a" style="left:138px;top:120px;width:103px;height:20px;background:#c9d8ed;border-bottom:1px solid #c2d2ea"></div>
<div class="a" style="left:183px;top:123px;width:13px;height:13px;border:1px solid #b2bac7;background:linear-gradient(135deg,#e4e9f0,#f8fafc);"></div><svg class="a" style="left:185px;top:125px" width="10" height="9"><path d="M1 4.300 L3.800 7.300 L8.500 1" fill="none" stroke="#64748a" stroke-width="2.300"/></svg>
<div class="a" style="left:21px;top:140px;width:117px;height:20px;background:#fff;border-bottom:1px solid #cbd9ec;border-left:1px solid #dbe5f3;overflow:hidden"><div class="t" style="left:37px;top:2px;font-size:11px;letter-spacing:-.25px;color:#1f2e4d;width:75px;overflow:hidden">Не для велосип</div></div><div class="a" style="left:138px;top:140px;width:103px;height:20px;background:#c9d8ed;border-bottom:1px solid #c2d2ea"></div>
<div class="a" style="left:183px;top:143px;width:13px;height:13px;border:1px solid #b2bac7;background:linear-gradient(135deg,#e4e9f0,#f8fafc);"></div><svg class="a" style="left:185px;top:145px" width="10" height="9"><path d="M1 4.300 L3.800 7.300 L8.500 1" fill="none" stroke="#64748a" stroke-width="2.300"/></svg>
<div class="a" style="left:21px;top:160px;width:117px;height:20px;background:#fff;border-bottom:1px solid #cbd9ec;border-left:1px solid #dbe5f3;overflow:hidden"><div class="t" style="left:37px;top:2px;font-size:11px;letter-spacing:-.25px;color:#1f2e4d;width:75px;overflow:hidden">Не для грузови</div></div><div class="a" style="left:138px;top:160px;width:103px;height:20px;background:#c9d8ed;border-bottom:1px solid #c2d2ea"></div>
<div class="a" style="left:183px;top:163px;width:13px;height:13px;border:1px solid #b2bac7;background:linear-gradient(135deg,#e4e9f0,#f8fafc);"></div><svg class="a" style="left:185px;top:165px" width="10" height="9"><path d="M1 4.300 L3.800 7.300 L8.500 1" fill="none" stroke="#64748a" stroke-width="2.300"/></svg>
<div class="a" style="left:0;top:179px;width:241px;height:19px;border-bottom:1px solid #d3deee"></div><svg class="a" style="left:8px;top:185px" width="9" height="7"><path d="M1.500 1.500 L4.500 4.800 L7.500 1.500" fill="none" stroke="#3b4a66" stroke-width="2"/></svg><div class="t" style="left:41px;top:182px;font-weight:700;font-size:11px;letter-spacing:.32px;color:#1a2a4a">Время действия ограничения</div>
<div class="a" style="left:21px;top:198px;width:117px;height:20px;background:#fff;border-bottom:1px solid #cbd9ec;border-left:1px solid #dbe5f3;overflow:hidden"><div class="t" style="left:37px;top:2px;font-size:11px;letter-spacing:-.25px;color:#1f2e4d;width:75px;overflow:hidden">Ограничений</div></div><div class="a" style="left:138px;top:198px;width:103px;height:20px;background:#c9d8ed;border-bottom:1px solid #c2d2ea"></div>
<div class="t" style="left:141px;top:201px;font-size:11px">0</div>
<div class="a" style="left:0;top:218px;width:241px;height:18px;border-bottom:1px solid #d3deee"></div><svg class="a" style="left:8px;top:224px" width="9" height="7"><path d="M1.500 1.500 L4.500 4.800 L7.500 1.500" fill="none" stroke="#3b4a66" stroke-width="2"/></svg><div class="t" style="left:41px;top:221px;font-weight:700;font-size:11px;letter-spacing:.32px;color:#1a2a4a">Подписи развязок</div>
<div class="a" style="left:21px;top:236px;width:117px;height:48px;background:#fff;border-bottom:1px solid #cbd9ec;border-left:1px solid #dbe5f3;overflow:hidden"><div class="t" style="left:37px;top:2px;font-size:11px;letter-spacing:-.25px;color:#1f2e4d;width:75px;overflow:hidden">Тип</div></div><div class="a" style="left:138px;top:236px;width:103px;height:48px;background:#c9d8ed;border-bottom:1px solid #c2d2ea"></div>
<svg class="a" style="left:142px;top:240px" width="12" height="12"><circle cx="6" cy="6" r="5.300" fill="#eef0f3" stroke="#a9b1bc"/><circle cx="6" cy="6" r="2.200" fill="#7d8794"/></svg><div class="t" style="left:160px;top:239px;font-size:11px">Съезд</div>
<svg class="a" style="left:142px;top:255px" width="12" height="12"><circle cx="6" cy="6" r="5.300" fill="#eef0f3" stroke="#a9b1bc"/></svg><div class="t" style="left:160px;top:254px;font-size:11px">На (к)</div>
<svg class="a" style="left:142px;top:270px" width="12" height="12"><circle cx="6" cy="6" r="5.300" fill="#eef0f3" stroke="#a9b1bc"/></svg><div class="t" style="left:160px;top:269px;font-size:11px">По направлени</div>
<div class="a" style="left:21px;top:284px;width:117px;height:20px;background:#fff;border-bottom:1px solid #cbd9ec;border-left:1px solid #dbe5f3;overflow:hidden"><div class="t" style="left:37px;top:2px;font-size:11px;letter-spacing:-.25px;color:#1f2e4d;width:75px;overflow:hidden">Текст</div></div><div class="a" style="left:138px;top:284px;width:103px;height:20px;background:#c9d8ed;border-bottom:1px solid #c2d2ea"></div>
</div>
<div class="a" style="left:1332px;top:338px;width:18px;height:302px;background:#e9f0fa;border-left:1px solid #d3deee"></div>
<div class="a" style="left:1334px;top:357px;width:15px;height:201px;background:linear-gradient(90deg,#dbe5f3,#c6d4ea);border:1px solid #b3c3dc;border-radius:2px"></div>
<svg class="a" style="left:1334px;top:343px" width="15" height="295" viewBox="0 0 15 295"><path d="M2.500 8 L7.500 2.500 L12.500 8z M2.500 284 L7.500 289.500 L12.500 284z" fill="#4a5874"/><path d="M4 112.500 h7 M4 114.500 h7 M4 116.500 h7 M4 118.500 h7" stroke="#7f91b0" stroke-width="1"/></svg>
<div class="a" style="left:1091px;top:639px;width:260px;height:1px;background:#b3c3dc"></div>
<div class="a" style="left:1089px;top:653px;width:49px;height:17px;background:#ccdaed"></div>
<svg class="a" style="left:1094px;top:655px" width="40" height="12" viewBox="0 0 40 12"><path d="M9 1.500 L4.500 6 L9 10.500z" fill="#b5c4da"/><path d="M29 1.500 L33.500 6 L29 10.500z" fill="#5b6a86"/></svg>
<div class="a" style="left:1138px;top:640px;width:135px;height:30px;background:#fff;border:1px solid #b4c5dd;border-top:0"></div>
<svg class="a" style="left:1146px;top:645px" width="19" height="19" viewBox="0 0 18 19"><path d="M2 16 L7 11" stroke="#1f7fb0" stroke-width="3" stroke-linecap="round"/><circle cx="9" cy="7" r="4" fill="#f6e7a8" stroke="#3c8fbf" stroke-width="1.200"/><rect x="9.500" y="2.500" width="7" height="3.500" fill="#7fd0e8" stroke="#1b7ea6" stroke-width=".8"/><rect x="10.500" y="7.500" width="6.500" height="3.500" fill="#7fd0e8" stroke="#1b7ea6" stroke-width=".8"/><rect x="10.500" y="13" width="6.500" height="3.500" fill="#3da4cf" stroke="#1b7ea6" stroke-width=".8"/></svg>
<div class="t" style="left:1169px;top:648px;font-size:11px;letter-spacing:.05px;color:#1f2e4d">Свойства объекта</div>
<div class="a" style="left:1273px;top:641px;width:75px;height:26px;background:#b7cbe6"></div>
<svg class="a" style="left:1280px;top:645px" width="18" height="18" viewBox="0 0 18 18"><path d="M2.500 1 v16" stroke="#c8923a" stroke-width="2"/><path d="M3.500 1.500 L16 6 L3.500 11z" fill="#9bd11f" stroke="#5f8a10" stroke-width=".8"/></svg>
<div class="t" style="left:1303px;top:647px;font-size:11px;color:#1f2e4d;width:45px;overflow:hidden">Точки тр</div>

<div class="a" style="left:0;top:680px;width:1359px;height:19px;background:#cfdcee"></div>
<div class="a" style="left:5px;top:682px;width:22px;height:18px;background:#d1def1;border:1px solid #9fb6d6"></div>
<svg class="a" style="left:8px;top:686px" width="17" height="14" viewBox="0 0 17 16"><path d="M1 14 L3 5 L4 1.500 h3 l1 3.500 v9z M16 14 L14 5 L13 1.500 h-3 l-1 3.500 v9z" fill="#1f5f87" stroke="#0d3550" stroke-width=".7"/><rect x="7" y="5" width="3" height="4" fill="#0d3550"/></svg>
<div class="a" style="left:29px;top:682px;width:178px;height:18px;background:#d1def1;border:1px solid #9fb6d6"></div>
<svg class="a" style="left:33px;top:684px" width="14" height="16" viewBox="0 0 14 16"><rect x="1.500" y="2.500" width="11" height="14" fill="#fff" stroke="#333"/><path d="M3 1 v3 M5.500 1 v3 M8 1 v3 M10.500 1 v3" stroke="#333"/><path d="M3 7.500 l1 1 2 -2" stroke="#d22" fill="none"/><rect x="3" y="10.500" width="2.500" height="2.500" fill="#2a9d5a"/><path d="M7.500 7.500 h3.500 M7.500 11.500 h3.500" stroke="#333"/></svg>
<div class="t" style="left:55px;top:686px;font-size:11.500px;color:#1f2e4d">Результаты проверки карты</div>

<div class="a" style="left:0px;top:14px;width:490px;height:335px;background:linear-gradient(#bdd0e8,#c3d4ea 40px,#c6d6eb);border:1px solid #8aa0c0;box-shadow:0 1px 0 #a9bad3"></div>
<div class="t" style="left:16px;top:23px;font-size:12px;letter-spacing:.1px;color:#1f2e4d">Ограничения поворотов</div>
<svg class="a" style="left:462px;top:24px" width="15" height="12" viewBox="0 0 15 12"><path d="M4.500 3.500 L10.500 8.700 M10.500 3.500 L4.500 8.700" stroke="#2f3d59" stroke-width="3.800" stroke-linecap="round"/><path d="M4.500 3.500 L10.500 8.700 M10.500 3.500 L4.500 8.700" stroke="#fff" stroke-width="2.200" stroke-linecap="round"/></svg>
<div class="a" style="left:7px;top:41px;width:476px;height:300px;background:#cfdcee;border:1px solid #7f97ba"></div>
<svg class="a" style="left:10px;top:44px" width="125" height="19" viewBox="0 0 125 19">
<g fill="none" stroke-linecap="round">
<path d="M5 3 v8 a4 4 0 0 0 8 0 v-7" stroke="#55a043" stroke-width="4.500"/><path d="M5 3 v8 a4 4 0 0 0 8 0 v-7" stroke="#b2e39a" stroke-width="2.400"/>
<path d="M26 6 h5 a4 4 0 0 1 4 4 v4" stroke="#55a043" stroke-width="4.500"/><path d="M26 6 h5 a4 4 0 0 1 4 4 v4" stroke="#b2e39a" stroke-width="2.400"/>
<path d="M51 15 v-11 M51 11 q0 -3 6 -1" stroke="#55a043" stroke-width="4.500"/><path d="M51 15 v-11" stroke="#b2e39a" stroke-width="2.400"/>
<path d="M83 4 q0 5 4 6 v5 M92 4 q0 5 -4 6" stroke="#55a043" stroke-width="4"/><path d="M83 4 q0 5 4 6 v5 M92 4 q0 5 -4 6" stroke="#b2e39a" stroke-width="1.600"/>
<path d="M117 15 v-10" stroke="#55a043" stroke-width="4"/><path d="M117 15 v-10" stroke="#b2e39a" stroke-width="1.600"/>
</g>
<path d="M47 6 l4 -5 4 5z M113 6 l4 -5 4 5z M10 5 l3 -4 3 4z" fill="#55a043"/>
<circle cx="14" cy="14.500" r="3.500" fill="#f47a20" stroke="#c8540a" stroke-width=".6"/><path d="M12 14.500 h4" stroke="#fff" stroke-width="1.200"/>
<circle cx="37" cy="14.500" r="3.500" fill="#f47a20" stroke="#c8540a" stroke-width=".6"/><path d="M35 14.500 h4" stroke="#fff" stroke-width="1.200"/>
<circle cx="59" cy="14.500" r="3.500" fill="#f47a20" stroke="#c8540a" stroke-width=".6"/><path d="M57 14.500 h4" stroke="#fff" stroke-width="1.200"/>
<circle cx="91" cy="14.500" r="3.300" fill="#b2e39a" stroke="#55a043" stroke-width=".8"/>
<path d="M70.500 1 v17 M101.500 1 v17" stroke="#a9bad3"/><path d="M71.500 1 v17 M102.500 1 v17" stroke="#eef3fa"/>
</svg>
<div class="a" style="left:9px;top:64px;width:472px;height:233px;background:#fff;border:1px solid;border-color:#70757c #e8edf4 #e8edf4 #7d8792;border-top-width:2px"></div>
<svg class="a" style="left:468px;top:72px" width="8" height="6"><path d="M.5 5 L4 1 L7.500 5z" fill="#60666f"/></svg>
<div class="a" style="left:464px;top:85px;width:15px;height:150px;background:linear-gradient(90deg,#fdfdfd,#ececec);border:1px solid #9a9fa8;border-radius:2px"></div>
<div class="a" style="left:23px;top:118px;width:13px;height:13px;background:#fff;border:2px solid #7b7d82"></div>
<div class="t" style="left:19px;top:136px;width:100px;text-align:center;font-size:11px;color:#111;letter-spacing:-.08px">666262 - 586578</div>
<div class="a" style="left:130px;top:118px;width:13px;height:13px;background:#fff;border:2px solid #7b7d82"></div>
<div class="t" style="left:126px;top:136px;width:100px;text-align:center;font-size:11px;color:#111;letter-spacing:-.08px">666262 - 667761</div>
<div class="a" style="left:237px;top:118px;width:13px;height:13px;background:#fff;border:2px solid #7b7d82"></div>
<div class="t" style="left:233px;top:136px;width:100px;text-align:center;font-size:11px;color:#111;letter-spacing:-.08px">3</div>
<div class="a" style="left:344px;top:118px;width:13px;height:13px;background:#fff;border:2px solid #7b7d82"></div>
<div class="t" style="left:340px;top:136px;width:100px;text-align:center;font-size:11px;color:#111;letter-spacing:-.08px">4</div>
<div class="a" style="left:23px;top:225px;width:13px;height:13px;background:#fff;border:2px solid #7b7d82"></div>
<div class="t" style="left:19px;top:243px;width:100px;text-align:center;font-size:11px;color:#111">5</div>
<div class="a" style="left:130px;top:225px;width:13px;height:13px;background:#fff;border:2px solid #7b7d82"></div>
<div class="t" style="left:126px;top:243px;width:100px;text-align:center;font-size:11px;color:#111">6</div>
<div class="a" style="left:237px;top:225px;width:13px;height:13px;background:#fff;border:2px solid #7b7d82"></div>
<div class="t" style="left:233px;top:243px;width:100px;text-align:center;font-size:11px;color:#111">7</div>
<div class="a" style="left:344px;top:225px;width:13px;height:13px;background:#fff;border:2px solid #7b7d82"></div>
<div class="t" style="left:340px;top:243px;width:100px;text-align:center;font-size:11px;color:#111">8</div>
<svg class="a" style="left:0;top:90px" width="440" height="135" viewBox="0 90 440 135"><path d="M75 100.500 L101 97.500" stroke="#111" stroke-width="1.800"/><path d="M36 103 L70 101 L101 108.500" fill="none" stroke="#0a840a" stroke-width="4.200"/><path d="M3.500,0 L-3.500,-3 L-3.500,3z" transform="translate(55,102) rotate(-4)" fill="#333"/><path d="M3.500,0 L-3.500,-3 L-3.500,3z" transform="translate(86,104.5) rotate(14)" fill="#333"/><path d="M179 101 L207 108.500" stroke="#111" stroke-width="1.800"/><path d="M144 103 L180 100.500 L207.500 97" fill="none" stroke="#0a840a" stroke-width="4.200"/><path d="M3.500,0 L-3.500,-3 L-3.500,3z" transform="translate(163,102) rotate(-4)" fill="#333"/><path d="M3.500,0 L-3.500,-3 L-3.500,3z" transform="translate(193,99) rotate(-7)" fill="#333"/><path d="M282 100.500 L315 108" stroke="#fbfb95" stroke-width="3.800"/><path d="M250 103 L285 100 L315 97.500" fill="none" stroke="#444" stroke-width="1.300" stroke-dasharray="1.500 1"/><path d="M3.500,0 L-3.500,-3 L-3.500,3z" transform="translate(297,103.5) rotate(14)" fill="#5f5f5f"/><path d="M358 102.500 L395 100 L422 107.500" fill="none" stroke="#fbfb95" stroke-width="3.800"/><path d="M395 100 L422 97" stroke="#444" stroke-width="1.300" stroke-dasharray="1.500 1"/><path d="M3.500,0 L-3.500,-3 L-3.500,3z" transform="translate(371,101.5) rotate(176)" fill="#5f5f5f"/><path d="M3.500,0 L-3.500,-3 L-3.500,3z" transform="translate(403,103) rotate(194)" fill="#5f5f5f"/><path d="M68 207 L101 204 M80 208 L101 215" stroke="#fbfb95" stroke-width="3.800"/><path d="M36 210 L70 207" stroke="#444" stroke-width="1.300" stroke-dasharray="1.500 1"/><path d="M3.500,0 L-3.500,-3 L-3.500,3z" transform="translate(86,208.5) rotate(190)" fill="#5f5f5f"/><path d="M144 208 L176 207" stroke="#fbfb95" stroke-width="3.800"/><path d="M175 207 L207 204 M175 207 L207 214" stroke="#444" stroke-width="1.300" stroke-dasharray="1.500 1"/><path d="M3.500,0 L-3.500,-3 L-3.500,3z" transform="translate(158,208) rotate(180)" fill="#5f5f5f"/><path d="M285 206 L315 203 M295 208 L315 215" stroke="#fbfb95" stroke-width="3.800"/><path d="M250 210 L290 206" stroke="#444" stroke-width="1.300" stroke-dasharray="1.500 1"/><path d="M3.500,0 L-3.500,-3 L-3.500,3z" transform="translate(300,207.5) rotate(200)" fill="#5f5f5f"/></svg>
<div class="a" style="left:288px;top:304px;width:72px;height:24px;border:1px solid #a5b8d4;border-radius:3px;background:linear-gradient(#f3f7fc,#dfe8f4 55%,#d3dfef)"></div><div class="t" style="left:297px;top:309px;font-size:11px;letter-spacing:-.2px;color:#1f2e4d">Применить</div>
<div class="a" style="left:359px;top:126px;width:649px;height:505px;background:#dfe9f6;border:1px solid #a3b6d2"></div>
<div class="t" style="left:375px;top:135px;font-size:12px;color:#7b8ca8">Полосы движения</div>
<svg class="a" style="left:980px;top:136px" width="15" height="12" viewBox="0 0 15 12"><path d="M4 3 L11 9 M11 3 L4 9" stroke="#4a5874" stroke-width="3.800" stroke-linecap="round"/><path d="M4 3 L11 9 M11 3 L4 9" stroke="#fff" stroke-width="2.100" stroke-linecap="round"/></svg>
<div class="a" style="left:366px;top:152px;width:635px;height:472px;background:#d0deef;border:1px solid #7f97ba"></div>
<div class="a" style="left:367px;top:153px;width:633px;height:23px;background:#f0f0f0"></div>
<div class="a" style="left:367px;top:153px;width:22px;height:23px;background:#f8f8f8;border:1px solid;border-color:#8a96a8 #fff #fff #8a96a8"></div>
<svg class="a" style="left:369px;top:155px" width="75" height="20" viewBox="0 0 75 20"><g transform="translate(0,2) scale(1,.82)">
<g fill="none" stroke="#3f8a35" stroke-width="3.400" stroke-linejoin="round"><path d="M2 6 h4 l4.500 8 h3 M2 14 h4 l4.500 -8 h3"/><path d="M2.500 10 h6"/></g>
<path d="M12 2.500 l5 3.500 -5 3.500z M12 10.500 l5 3.500 -5 3.500z" fill="#3f8a35"/>
<g fill="none" stroke="#8ed07c" stroke-width="1.500" stroke-linejoin="round"><path d="M2 6 h4 l4.500 8 h3 M2 14 h4 l4.500 -8 h3"/><path d="M2.500 10 h6"/></g>
<path d="M13 4.500 l2.500 1.500 -2.500 1.500z M13 12.500 l2.500 1.500 -2.500 1.500z" fill="#8ed07c"/>
<g fill="none" stroke="#3f8a35" stroke-width="4.200" stroke-linecap="round"><path d="M26.500 16 q.5 -4.500 5 -6.500 v-3 M37.500 16 q-.5 -4.500 -5 -6.500"/></g><path d="M27 7.500 l5 -6 5 6z" fill="#3f8a35"/>
<g fill="none" stroke="#9ad888" stroke-width="1.800" stroke-linecap="round"><path d="M26.500 16 q.5 -4.500 5 -6.500 v-3 M37.500 16 q-.5 -4.500 -5 -6.500"/></g><path d="M29.500 6.500 l2.500 -3 2.500 3z" fill="#9ad888"/>
<path d="M46.500 1 v18" stroke="#b8c2d0"/><path d="M47.500 1 v18" stroke="#fff"/>
<g fill="none" stroke="#4a9a3f" stroke-width="3.800"><path d="M57 8.500 a6.500 5 0 0 1 10 -2"/><path d="M70 11.500 a6.500 5 0 0 1 -10 2"/></g><path d="M64.500 2 l6.500 3.500 -5.500 4.500z M62.500 18 l-6.500 -3.500 5.500 -4.500z" fill="#4a9a3f"/>
<g fill="none" stroke="#a3dc92" stroke-width="1.400"><path d="M57 8.500 a6.500 5 0 0 1 10 -2"/><path d="M70 11.500 a6.500 5 0 0 1 -10 2"/></g>
</g></svg>
<div class="a" style="left:367px;top:176px;width:201px;height:409px;background:#cfddef;border-right:1px solid #b9c9df"></div>
<div class="a" style="left:568px;top:176px;width:432px;height:409px;background:#fff"></div>
<div class="a" style="left:367px;top:585px;width:633px;height:1px;background:#8da4c4"></div>
<div class="a" style="left:369px;top:177px;width:197px;height:55px;background:#c1dcc1"></div><div class="a" style="left:369px;top:232px;width:197px;height:54px;background:#a6caf0"></div><div class="a" style="left:369px;top:286px;width:197px;height:20px;background:#c1dcc1"></div><div class="a" style="left:369px;top:305px;width:197px;height:74px;background:#d3e4ee"></div><div class="a" style="left:516px;top:195px;width:50px;height:37px;background:#d4e0f1"></div><div class="a" style="left:516px;top:249px;width:50px;height:130px;background:#d4e0f1"></div>
<div class="a" style="left:369px;top:177px;width:197px;height:18px;background:#c1dcc1"></div><div class="t" style="left:392px;top:180px;font-size:11.500px;font-weight:700;letter-spacing:.42px;color:#14283f">ID дороги - 586578</div>
<div class="a" style="left:369px;top:196px;width:19px;height:17px;background:#c1dcc1"></div><div class="a" style="left:389px;top:196px;width:127px;height:17px;background:#c1dcc1;overflow:hidden"><div class="t" style="left:21px;top:2px;font-size:11px;letter-spacing:-.3px;color:#1f2e4d">Полос по направлени</div></div><div class="a" style="left:517px;top:196px;width:49px;height:17px;background:#cbd9ee"></div><div class="t" style="left:521px;top:199px;font-size:11px;color:#111">1</div>
<div class="a" style="left:369px;top:214px;width:19px;height:17px;background:#c1dcc1"></div><div class="a" style="left:389px;top:214px;width:127px;height:17px;background:#c1dcc1;overflow:hidden"><div class="t" style="left:21px;top:2px;font-size:11px;letter-spacing:-.3px;color:#1f2e4d">Полос обратно</div></div><div class="a" style="left:517px;top:214px;width:49px;height:17px;background:#cbd9ee"></div><div class="t" style="left:521px;top:217px;font-size:11px;color:#111">0</div>
<div class="a" style="left:369px;top:232px;width:197px;height:17px;background:#a6caf0"></div><div class="t" style="left:392px;top:235px;font-size:11.500px;font-weight:700;letter-spacing:.42px;color:#14283f">ID дороги - 666262</div>
<div class="a" style="left:369px;top:250px;width:19px;height:17px;background:#a6caf0"></div><div class="a" style="left:389px;top:250px;width:127px;height:17px;background:#a6caf0;overflow:hidden"><div class="t" style="left:21px;top:2px;font-size:11px;letter-spacing:-.3px;color:#1f2e4d">Полос по направлени</div></div><div class="a" style="left:517px;top:250px;width:49px;height:17px;background:#cbd9ee"></div><div class="t" style="left:521px;top:253px;font-size:11px;color:#111">1</div>
<div class="a" style="left:369px;top:268px;width:19px;height:17px;background:#a6caf0"></div><div class="a" style="left:389px;top:268px;width:127px;height:17px;background:#a6caf0;overflow:hidden"><div class="t" style="left:21px;top:2px;font-size:11px;letter-spacing:-.3px;color:#1f2e4d">Полос обратно</div></div><div class="a" style="left:517px;top:268px;width:49px;height:17px;background:#cbd9ee"></div><div class="t" style="left:521px;top:271px;font-size:11px;color:#111">0</div>
<div class="a" style="left:369px;top:286px;width:19px;height:19px;background:#c1dcc1"></div><div class="a" style="left:389px;top:286px;width:127px;height:19px;background:#c1dcc1;overflow:hidden"><div class="t" style="left:21px;top:3px;font-size:11px;letter-spacing:-.3px;color:#1f2e4d">1-&gt;1</div></div><div class="a" style="left:517px;top:286px;width:49px;height:19px;background:#cbd9ee"></div><div class="a" style="left:535px;top:290px;width:12px;height:12px;border:1px solid #b1b9c6;background:#e4e9f2"></div>
<div class="a" style="left:369px;top:306px;width:19px;height:19px;background:#008080"></div><div class="a" style="left:389px;top:306px;width:127px;height:19px;background:#008080;overflow:hidden"><div class="t" style="left:21px;top:3px;font-size:11px;letter-spacing:-.3px;color:#1d4d5a">1-&gt;1</div></div><div class="a" style="left:517px;top:306px;width:49px;height:19px;background:#cbd9ee"></div><div class="a" style="left:535px;top:310px;width:12px;height:12px;border:1px solid #b1b9c6;background:#e4e9f2"></div>
<div class="a" style="left:369px;top:326px;width:197px;height:17px;background:#008080"></div><div class="t" style="left:392px;top:329px;font-size:11.500px;font-weight:700;letter-spacing:.42px;color:#124852">ID дороги - 667761</div>
<div class="a" style="left:369px;top:344px;width:19px;height:17px;background:#008080"></div><div class="a" style="left:389px;top:344px;width:127px;height:17px;background:#008080;overflow:hidden"><div class="t" style="left:21px;top:2px;font-size:11px;letter-spacing:-.3px;color:#124852">Полос по направлени</div></div><div class="a" style="left:517px;top:344px;width:49px;height:17px;background:#cbd9ee"></div><div class="t" style="left:521px;top:347px;font-size:11px;color:#111">1</div>
<div class="a" style="left:369px;top:362px;width:19px;height:17px;background:#008080"></div><div class="a" style="left:389px;top:362px;width:127px;height:17px;background:#008080;overflow:hidden"><div class="t" style="left:21px;top:2px;font-size:11px;letter-spacing:-.3px;color:#124852">Полос обратно</div></div><div class="a" style="left:517px;top:362px;width:49px;height:17px;background:#cbd9ee"></div><div class="t" style="left:521px;top:365px;font-size:11px;color:#111">0</div>
<div class="a" style="left:369px;top:195px;width:19px;height:1px;background:#e4f1e4"></div><div class="a" style="left:369px;top:213px;width:19px;height:1px;background:#e4f1e4"></div><div class="a" style="left:369px;top:249px;width:19px;height:1px;background:#d6e7fa"></div><div class="a" style="left:369px;top:267px;width:19px;height:1px;background:#d6e7fa"></div><div class="a" style="left:369px;top:285px;width:19px;height:1px;background:#d6e7fa"></div><svg class="a" style="left:568px;top:176px" width="432" height="409" viewBox="568 176 432 409">
<polygon points="568,396.500 723,381.500 724,390 568,405" fill="#a6caf0" stroke="#111" stroke-width="1"/>
<polygon points="842.500,371.250 997.500,358.750 999.500,367.500 844.500,380" fill="#008080" stroke="#0b3a3a" stroke-width="1"/>
<polygon points="843,391.250 993,432.500 990.500,441.250 840,400" fill="#c0dcc0" stroke="#111" stroke-width="1"/>
<path d="M714,383.200 L706,381 L706.700,387z" fill="#333"/><path d="M991,360.200 L983,357.600 L983.500,364z" fill="#333"/><path d="M985,430.500 L979,424 L976,430.500z" fill="#333"/>
</svg>
<div class="a" style="left:369px;top:593px;width:74px;height:24px;border:1px solid #a5b8d4;border-radius:3px;background:linear-gradient(#eef3fa,#dde7f3 55%,#d0dcee)"></div><div class="t" style="left:384px;top:598px;font-size:11px;letter-spacing:0.1px;color:#1f2e4d">Закрыть</div>
<div class="a" style="left:450px;top:593px;width:75px;height:24px;border:1px solid #a5b8d4;border-radius:3px;background:linear-gradient(#eef3fa,#dde7f3 55%,#d0dcee)"></div><div class="t" style="left:466px;top:598px;font-size:11px;letter-spacing:-0.2px;color:#1f2e4d">Помощь</div>
</body></html>
